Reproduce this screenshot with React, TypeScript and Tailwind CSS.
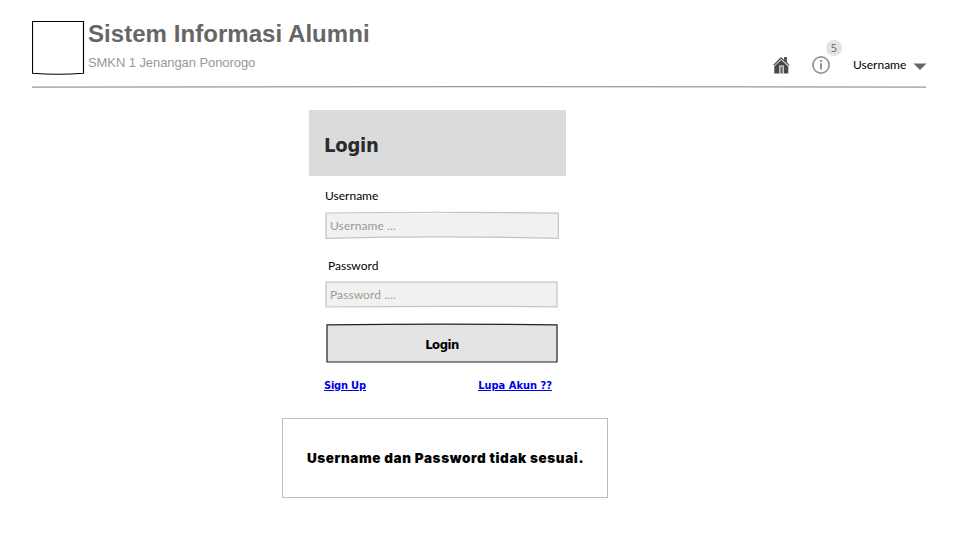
import type { ReactNode } from "react";

const HAND = "font-['Comic_Sans_MS',Lato,sans-serif]";
const TAHOMA = "font-['DejaVu_Sans_Condensed','DejaVu_Sans',sans-serif] font-bold [font-stretch:condensed]";

function HomeIcon() {
  return (
    <svg width="17" height="18" viewBox="0 0 17 18" className="block" aria-hidden="true">
      <path d="M0.3 8.8 L8 1 L11 3.8 V1 H14 V6.3 L16.6 9 L15.8 9.8 L8.2 2.9 L1.2 9.8 Z" fill="#555" />
      <path d="M1.3 10.6 L8.2 4 L15.3 10.6 V17.5 H11 V9.8 H6 V17.5 H1.3 Z" fill="#484848" />
      <path d="M6 9.6 H11 V17.5 H10 V10.6 H7 V17.5 H6 Z" fill="#c4c4c4" />
      <path d="M7.3 10.6 H9.7 V17.5 H7.3 Z" fill="#666" />
    </svg>
  );
}

function InfoIcon() {
  return (
    <svg width="18" height="18" viewBox="0 0 18 18" className="block" aria-hidden="true">
      <circle cx="9" cy="9" r="8.1" fill="none" stroke="#949494" strokeWidth="1.7" />
      <path d="M8 4 H10 V6 H8 Z M8 7.2 H10 V13.4 H8 Z" fill="#949494" />
    </svg>
  );
}

function Field({ path, children }: { path: string; children: ReactNode }) {
  return (
    <div className="relative flex h-[28px] w-[234px] items-center pt-[2px]">
      <svg className="absolute inset-0" width="234" height="28" aria-hidden="true">
        <path d={path} fill="#f1f1f1" stroke="#c3c3c3" strokeWidth="1.2" />
      </svg>
      {children}
    </div>
  );
}

export default function App() {
  return (
    <div className="h-[542px] w-[977px] overflow-hidden bg-white">
      <header className="ml-8 flex h-[85px] w-[895px] pt-5">
        <svg width="53" height="56" className="block shrink-0" aria-hidden="true">
          <path d="M0.5 1.5 H51.5 V53.2 Q26 55.2 0.5 53.2 Z" fill="#fff" stroke="#000" strokeWidth="1.15" />
        </svg>
        <div className="ml-[3px] font-['Liberation_Sans',Arial,sans-serif]">
          <h1 className="h-[28px] whitespace-nowrap text-[24px] leading-[28px] font-bold tracking-[0.05px] text-[#666]">
            Sistem Informasi Alumni
          </h1>
          <p className="mt-[7px] h-4 whitespace-nowrap text-[13px] leading-4 tracking-[-0.08px] text-[#999]">
            SMKN 1 Jenangan Ponorogo
          </p>
        </div>
        <div className="-mr-px ml-auto flex pt-9">
          <div className="w-[39px]">
            <HomeIcon />
          </div>
          <div className="relative w-[41px]">
            <InfoIcon />
            <span className="absolute -top-[16px] left-[14px] flex h-[16px] w-[16px] items-center justify-center rounded-full bg-[#e3e3e3] pb-[2px] font-['Open_Sans',sans-serif] text-[11px] leading-none text-[#666]">
              5
            </span>
          </div>
          <span className={`${HAND} block w-[60px] text-[12px] leading-[18px] whitespace-nowrap text-black`}>Username</span>
          <svg width="15" height="18" className="block" aria-hidden="true">
            <path d="M0.5 7.5 H13.5 L7 14 Z" fill="#666" />
          </svg>
        </div>
      </header>
      <svg width="895" height="4" className="ml-8 block" aria-hidden="true">
        <path d="M0 2.1 Q447 1 894 2.1" fill="none" stroke="#999" strokeWidth="1.2" />
      </svg>

      <main className="ml-[282px] w-[326px] pt-[21px]">
        <div className="ml-[27px] flex h-[66px] w-[257px] items-center bg-[#dbdbdb] pt-1 pl-[15px]">
          <h2 className={`${TAHOMA} text-[20px] leading-6 tracking-[-0.2px] text-[#2a2a2a]`}>Login</h2>
        </div>
        <form className="ml-[43px] w-[234px]">
          <div className={`${HAND} mt-[11px] h-[18px] text-[12px] leading-[18px] text-black`}>Username</div>
          <div className="mt-[6px]">
            <Field path="M1 2 Q117 0.4 233.3 2.2 V27.3 Q120 24.5 1 27.3 Z">
              <span className={`${HAND} relative pl-[5px] text-[12px] tracking-[0.08px] text-[#949b98]`}>Username ...</span>
            </Field>
          </div>
          <div className={`${HAND} mt-[18px] h-[18px] pl-[3px] text-[12px] leading-[18px] text-black`}>Password</div>
          <div className="mt-[5px]">
            <Field path="M1 2.2 H232 V26.8 Q117 25.8 1 27 Z">
              <span className={`${HAND} relative pl-[5px] text-[12px] tracking-[0.08px] text-[#9d9c8f]`}>Password ....</span>
            </Field>
          </div>
          <button type="button" className={`${TAHOMA} relative mt-[15px] block h-[40px] w-[234px] pt-1 text-[13px] tracking-[-0.5px] text-black`}>
            <svg className="absolute inset-0" width="234" height="40" aria-hidden="true">
              <path d="M2 1.9 Q117 0.2 232 1.9 V39 H2 Z" fill="#e4e4e4" stroke="#222" strokeWidth="1.2" />
            </svg>
            <span className="relative">Login</span>
          </button>
          <div className={`${TAHOMA} mt-[15px] -ml-px flex h-[15px] w-[228px] justify-between text-[11px] leading-4 text-[#0000e6] underline`}>
            <a className="tracking-[-0.2px]">Sign Up</a>
            <a>Lupa Akun ??</a>
          </div>
        </form>
        <div className="mt-[25px] flex h-[80px] w-[326px] items-center justify-center border border-[#bebebe] pt-px pl-px font-['Inter',sans-serif] text-[13.5px] font-black tracking-[0.58px] whitespace-nowrap text-black">
          Username dan Password tidak sesuai.
        </div>
      </main>
    </div>
  );
}
